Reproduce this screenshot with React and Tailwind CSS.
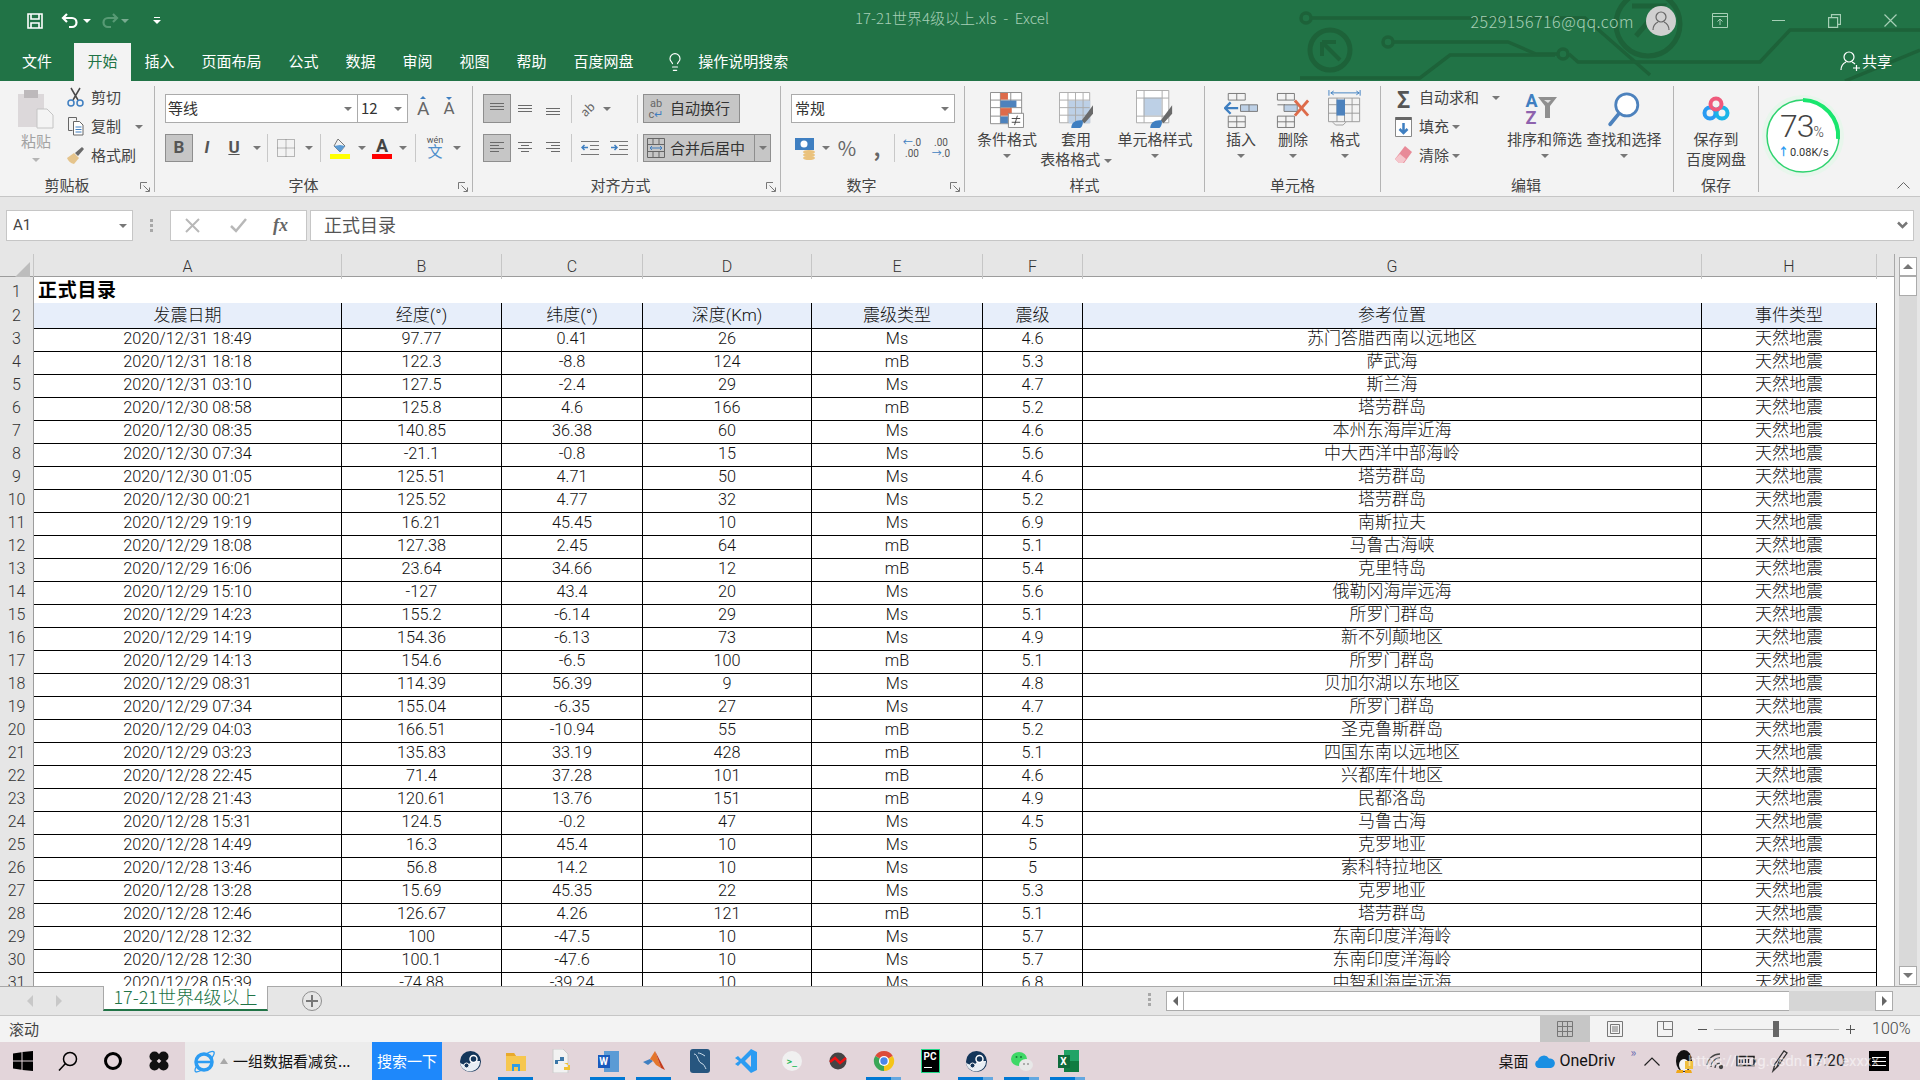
import React from 'react'
import { Lightbulb } from 'lucide-react'

const CELL_FONT = 'font-["Roboto","Noto_Sans_CJK_SC",sans-serif]'

const COLS = 'grid grid-cols-[34px_308px_160px_141px_169px_171px_100px_619px_175px]'

const ROWS = [
  ['2020/12/31 18:49', '97.77', '0.41', '26', 'Ms', '4.6', '苏门答腊西南以远地区'],
  ['2020/12/31 18:18', '122.3', '-8.8', '124', 'mB', '5.3', '萨武海'],
  ['2020/12/31 03:10', '127.5', '-2.4', '29', 'Ms', '4.7', '斯兰海'],
  ['2020/12/30 08:58', '125.8', '4.6', '166', 'mB', '5.2', '塔劳群岛'],
  ['2020/12/30 08:35', '140.85', '36.38', '60', 'Ms', '4.6', '本州东海岸近海'],
  ['2020/12/30 07:34', '-21.1', '-0.8', '15', 'Ms', '5.6', '中大西洋中部海岭'],
  ['2020/12/30 01:05', '125.51', '4.71', '50', 'Ms', '4.6', '塔劳群岛'],
  ['2020/12/30 00:21', '125.52', '4.77', '32', 'Ms', '5.2', '塔劳群岛'],
  ['2020/12/29 19:19', '16.21', '45.45', '10', 'Ms', '6.9', '南斯拉夫'],
  ['2020/12/29 18:08', '127.38', '2.45', '64', 'mB', '5.1', '马鲁古海峡'],
  ['2020/12/29 16:06', '23.64', '34.66', '12', 'mB', '5.4', '克里特岛'],
  ['2020/12/29 15:10', '-127', '43.4', '20', 'Ms', '5.6', '俄勒冈海岸远海'],
  ['2020/12/29 14:23', '155.2', '-6.14', '29', 'Ms', '5.1', '所罗门群岛'],
  ['2020/12/29 14:19', '154.36', '-6.13', '73', 'Ms', '4.9', '新不列颠地区'],
  ['2020/12/29 14:13', '154.6', '-6.5', '100', 'mB', '5.1', '所罗门群岛'],
  ['2020/12/29 08:31', '114.39', '56.39', '9', 'Ms', '4.8', '贝加尔湖以东地区'],
  ['2020/12/29 07:34', '155.04', '-6.35', '27', 'Ms', '4.7', '所罗门群岛'],
  ['2020/12/29 04:03', '166.51', '-10.94', '55', 'mB', '5.2', '圣克鲁斯群岛'],
  ['2020/12/29 03:23', '135.83', '33.19', '428', 'mB', '5.1', '四国东南以远地区'],
  ['2020/12/28 22:45', '71.4', '37.28', '101', 'mB', '4.6', '兴都库什地区'],
  ['2020/12/28 21:43', '120.61', '13.76', '151', 'mB', '4.9', '民都洛岛'],
  ['2020/12/28 15:31', '124.5', '-0.2', '47', 'Ms', '4.5', '马鲁古海'],
  ['2020/12/28 14:49', '16.3', '45.4', '10', 'Ms', '5', '克罗地亚'],
  ['2020/12/28 13:46', '56.8', '14.2', '10', 'Ms', '5', '索科特拉地区'],
  ['2020/12/28 13:28', '15.69', '45.35', '22', 'Ms', '5.3', '克罗地亚'],
  ['2020/12/28 12:46', '126.67', '4.26', '121', 'mB', '5.1', '塔劳群岛'],
  ['2020/12/28 12:32', '100', '-47.5', '10', 'Ms', '5.7', '东南印度洋海岭'],
  ['2020/12/28 12:30', '100.1', '-47.6', '10', 'Ms', '5.7', '东南印度洋海岭'],
  ['2020/12/28 05:39', '-74.88', '-39.24', '10', 'Ms', '6.8', '中智利海岸远海'],
]

const HEADERS = ['发震日期', '经度(°)', '纬度(°)', '深度(Km)', '震级类型', '震级', '参考位置', '事件类型']

function Caret({ className = '' }) {
  return <span className={`inline-block w-0 h-0 border-x-[4px] border-x-transparent border-t-[4px] border-t-[#777] ${className}`} />
}

function Launcher() {
  return (
    <svg className="absolute right-[3px] bottom-[3px]" width="11" height="11" viewBox="0 0 11 11" fill="none" stroke="#777">
      <path d="M.5 7V.5H7M3.5 3.5l5.5 5.500M9.500 5.500v4h-4" />
    </svg>
  )
}

function Group({ className = '', label, launcher, children }) {
  return (
    <div className={`relative flex flex-col h-full ${className}`}>
      <div className="flex-1 min-h-0">{children}</div>
      <div className="h-[22px] pb-[2px] flex items-center justify-center text-[15px] leading-none text-[#444]">{label}</div>
      {launcher && <Launcher />}
    </div>
  )
}

function Divider() {
  return <div className="w-px h-[106px] mt-[5px] bg-[#b4b4b4] shrink-0" />
}

function MiniDivider() {
  return <div className="w-px h-[28px] bg-[#c8c8c8] shrink-0" />
}

function Box({ className = '', children }) {
  return <div className={`flex items-center justify-center shrink-0 h-[28px] ${className}`}>{children}</div>
}

const ACTIVE = 'bg-[#c6c6c6] border border-[#8e8e8e]'

function AlignLines({ lines }) {
  return (
    <svg width="18" height="20" viewBox="0 0 18 20" stroke="#6a6a6a">
      {lines.map((l, i) => <path key={i} d={`M${l[0]} ${l[2]}.5H${l[1]}`} />)}
    </svg>
  )
}

function LargeButton({ className = '', icon, lines, arrow = true }) {
  return (
    <div className={`flex flex-col items-center shrink-0 ${className}`}>
      <div className="h-[48px] pt-[11px] flex items-start justify-center">{icon}</div>
      <div className="text-[15px] leading-[20px] text-[#444] whitespace-nowrap text-center">{lines}</div>
      {arrow && <div className="h-[14px] flex items-center"><Caret /></div>}
    </div>
  )
}

function SmallButton({ icon, text, caret, caretClass = 'ml-[6px]' }) {
  return (
    <div className="h-[29px] flex items-center text-[15px] text-[#444] whitespace-nowrap">
      <span className="w-[23px] flex justify-center shrink-0">{icon}</span>
      <span className="ml-[4px]">{text}</span>
      {caret && <Caret className={caretClass} />}
    </div>
  )
}

function CircuitBackground() {
  return (
    <svg className="absolute inset-0 pointer-events-none" width="1920" height="81" viewBox="0 0 1920 81" fill="none" stroke="#1d6239" strokeWidth="3.500">
      <circle cx="1306" cy="18" r="5" />
      <path d="M1311 18H1585L1650 75" />
      <circle cx="1388" cy="42" r="5" />
      <path d="M1393 42H1508L1536 54H1557" />
      <circle cx="1563" cy="54" r="5" />
      <path d="M1569 54L1578 62H1760L1790 30H1920" />
      <path d="M1300 78H1420L1450 55H1555" />
      <circle cx="1330" cy="50" r="20" strokeWidth="5" />
      <path d="M1322 42H1336M1322 42V56M1323 43L1340 60" strokeWidth="4" />
      <circle cx="1648" cy="24" r="32" strokeWidth="5" />
      <path d="M1632 6H1662L1636 36" strokeWidth="5" />
      <path d="M1845 81L1920 50" />
    </svg>
  )
}

function TitleBar() {
  return (
    <div className="relative h-[43px] pb-[2px] flex items-center text-white shrink-0">
      <svg className="ml-[27px]" width="16" height="16" viewBox="0 0 16 16" fill="none" stroke="#fff" strokeWidth="1.600">
        <path d="M1 1h14v14H1z" />
        <path d="M4 1v5h8V1M4 15V10h8v5" />
      </svg>
      <svg className="ml-[18px]" width="20" height="18" viewBox="0 0 20 18" fill="none" stroke="#fff" strokeWidth="2.200">
        <path d="M6 2L2 6l4 4M2 6h9a4.500 4.500 0 0 1 0 9H8" />
      </svg>
      <Caret className="ml-[2px] border-t-white border-x-[3px] border-t-[3px]" />
      <svg className="ml-[8px] opacity-40" width="20" height="18" viewBox="0 0 20 18" fill="none" stroke="#a9d4ba" strokeWidth="2.200">
        <path d="M14 2l4 4-4 4M18 6H9a4.500 4.500 0 0 0 0 9h3" />
      </svg>
      <Caret className="ml-[2px] opacity-40 border-t-white border-x-[3px] border-t-[3px]" />
      <div className="ml-[24px] flex flex-col items-center gap-[2px]">
        <div className="w-[6px] h-px bg-white" />
        <Caret className="border-t-white border-x-[3px] border-t-[3px]" />
      </div>
      <div className="absolute left-[855px] top-[7px] text-[15px] leading-[22px] text-[#a6cfb6] font-light whitespace-pre">17-21世界4级以上.xls  -  Excel</div>
      <div className="ml-auto flex items-center">
        <span className="text-[16px] text-[#a6cfb6] font-light tracking-[0.500px]">2529156716@qq.com</span>
        <div className="ml-[12px] w-[30px] h-[30px] rounded-full bg-[#d0d0d0] flex items-center justify-center">
          <svg width="20" height="22" viewBox="0 0 20 22" fill="none" stroke="#666" strokeWidth="1.200">
            <circle cx="10" cy="7" r="5" />
            <path d="M2 20c0-5 3-7 5-8M18 20c0-5-3-7-5-8" />
          </svg>
        </div>
        <svg className="ml-[36px]" width="16" height="15" viewBox="0 0 16 15" fill="none" stroke="#a6cfb6">
          <path d="M.5.500h15v14H.5zM.5 3.500h15M8 12V6M5.500 8.500L8 6l2.500 2.500" />
        </svg>
        <div className="ml-[44px] w-[13px] h-px bg-[#a6cfb6]" />
        <svg className="ml-[43px]" width="13" height="14" viewBox="0 0 13 14" fill="none" stroke="#a6cfb6" strokeWidth="1.200">
          <path d="M.6 3.600h9v9.800h-9zM3.500 3.500V.6h9v9.800h-2.900" />
        </svg>
        <svg className="ml-[43px] mr-[23px]" width="13" height="13" viewBox="0 0 13 13" stroke="#a6cfb6" strokeWidth="1.200">
          <path d="M.5.500l12 12M12.500.5l-12 12" />
        </svg>
      </div>
    </div>
  )
}

function TabBar() {
  const tabs = ['插入', '页面布局', '公式', '数据', '审阅', '视图', '帮助', '百度网盘']
  return (
    <div className="relative h-[38px] flex items-stretch text-white text-[15px] shrink-0">
      <div className="w-[74px] pl-[22px] pb-[2px] flex items-center">文件</div>
      <div className="w-[57px] pb-[2px] bg-[#f3f3f3] text-[#217346] flex items-center justify-center">开始</div>
      {tabs.map((t) => <div key={t} className="px-[13.500px] pb-[2px] flex items-center">{t}</div>)}
      <div className="ml-[18px] flex items-center"><Lightbulb size={20} strokeWidth={1.400} /></div>
      <div className="ml-[13px] pb-[2px] flex items-center">操作说明搜索</div>
      <div className="ml-auto mr-[28px] pb-[2px] flex items-center">
        <svg width="20" height="22" viewBox="0 0 20 22" fill="none" stroke="#fff" strokeWidth="1.200">
          <circle cx="9" cy="7" r="5" />
          <path d="M1 20c0-5 3-7 5-8M12 12c1 .5 2 1 3 2M13 18h7M16.500 15v6" />
        </svg>
        <span className="ml-[2px]">共享</span>
      </div>
    </div>
  )
}

function Clipboard() {
  return (
    <Group className="w-[154px]" label={<span className="mr-[20px]">剪贴板</span>} launcher>
      <div className="flex h-full">
        <div className="w-[64px] flex flex-col items-center pl-[8px] pt-[8px]">
          <svg width="36" height="40" viewBox="0 0 36 40">
            <rect x="0" y="5" width="26" height="33" fill="#dcd8da" />
            <rect x="6" y="1" width="14" height="8" fill="#bdb9bb" />
            <path d="M19 20h10l6 6v13H19z" fill="#f4f4f4" stroke="#c4c4c4" />
          </svg>
          <span className="text-[15px] leading-[20px] text-[#a2a2a2] mt-[2px]">粘贴</span>
          <Caret className="mt-[7px] border-t-[#b5b5b5]" />
        </div>
        <div className="flex flex-col pt-[2px]">
          <SmallButton text="剪切" icon={
            <svg width="17" height="21" viewBox="0 0 17 21" fill="none" stroke="#4a4a4a" strokeWidth="1.500">
              <path d="M4 1l7 12M13 1L6 13" />
              <circle cx="4" cy="16" r="3" stroke="#3f7fc1" />
              <circle cx="13" cy="16" r="3" stroke="#3f7fc1" />
            </svg>
          } />
          <SmallButton text="复制" caret caretClass="ml-[14px]" icon={
            <svg width="16" height="19" viewBox="0 0 16 19" fill="none" stroke="#666">
              <path d="M.5.500h8v3M.5.500v13h4" />
              <path d="M5.500 4.500h6l3.500 3.500v10H5.500z" fill="#fff" />
              <path d="M7.500 10h6M7.500 12.500h6M7.500 15h6" stroke="#3f7fc1" />
            </svg>
          } />
          <SmallButton text="格式刷" icon={
            <svg width="19" height="19" viewBox="0 0 19 19">
              <path d="M1 12l7-5 5 5-5 6q-5-1-7-6z" fill="#e5c48c" />
              <path d="M9 7l7-6 2 2-6 7z" fill="#6a6a6a" />
            </svg>
          } />
        </div>
      </div>
    </Group>
  )
}

function FontGroup() {
  return (
    <Group className="w-[317px]" label={<span className="mr-[20px]">字体</span>} launcher>
      <div className="pl-[10px] pt-[13px] flex flex-col gap-[11px]">
        <div className="flex items-center h-[29px]">
          <div className="w-[193px] h-[29px] bg-white border border-[#ababab] flex items-center pl-[2px] text-[15px] text-[#333]">
            等线
            <Caret className="ml-auto mr-[5px]" />
          </div>
          <div className="w-[50px] h-[29px] bg-white border border-l-0 border-[#ababab] flex items-center pl-[3px] text-[15px] text-[#333]">
            12
            <Caret className="ml-auto mr-[5px]" />
          </div>
          <span className={`ml-[9px] text-[19px] leading-none text-[#666] ${CELL_FONT} relative`}>
            A
            <span className="absolute -top-[3px] left-[3px] w-0 h-0 border-x-[3px] border-x-transparent border-b-[3px] border-b-[#3f7fc1]" />
          </span>
          <span className={`ml-[14px] text-[17px] leading-none text-[#666] ${CELL_FONT} relative`}>
            A
            <span className="absolute -top-[3px] left-[3px] w-0 h-0 border-x-[3px] border-x-transparent border-t-[3px] border-t-[#3f7fc1]" />
          </span>
        </div>
        <div className={`flex items-center text-[17px] text-[#555] ${CELL_FONT}`}>
          <Box className={`w-[28px] font-bold ${ACTIVE}`}>B</Box>
          <Box className="w-[28px] italic font-bold">I</Box>
          <Box className="w-[26px] font-bold underline">U</Box>
          <Box className="w-[20px]"><Caret /></Box>
          <MiniDivider />
          <Box className="w-[36px]">
            <svg width="18" height="18" viewBox="0 0 18 18" fill="none" stroke="#777" strokeDasharray="1 1">
              <path d="M.5.500h17v17H.5zM9 .5v17M.5 9h17" />
            </svg>
          </Box>
          <Box className="w-[10px]"><Caret /></Box>
          <div className="w-[6px]" />
          <MiniDivider />
          <Box className="w-[38px]">
            <div className="flex flex-col items-center">
              <svg width="18" height="16" viewBox="0 0 18 16" fill="none" stroke="#777">
                <path d="M7 1l7 7-5 6-6-6z" />
                <path d="M9 7l5 1-5 6-6-6z" fill="#5b9bd5" stroke="none" />
              </svg>
              <div className="w-[20px] h-[5px] bg-[#ffff00]" />
            </div>
          </Box>
          <Box className="w-[6px]"><Caret /></Box>
          <div className="w-[5px]" />
          <Box className="w-[24px]">
            <div className="flex flex-col items-center leading-[16px]">
              <span className="font-bold text-[18px] text-[#444]">A</span>
              <div className="w-[20px] h-[5px] bg-[#ff0000]" />
            </div>
          </Box>
          <Box className="w-[18px]"><Caret /></Box>
          <div className="w-[3px]" />
          <MiniDivider />
          <Box className="w-[38px]">
            <div className="flex flex-col items-center leading-none">
              <span className="text-[9px] text-[#555]">wén</span>
              <span className="text-[15px] text-[#4d8ecb]">文</span>
            </div>
          </Box>
          <Box className="w-[6px]"><Caret /></Box>
        </div>
      </div>
    </Group>
  )
}

const TOP_L = [[2, 16, 4], [2, 16, 7], [2, 16, 10]]
const MID_L = [[2, 16, 6], [2, 16, 9], [2, 16, 12]]
const BOT_L = [[2, 16, 9], [2, 16, 12], [2, 16, 15]]
const LEFT_L = [[2, 16, 4], [2, 11, 7], [2, 16, 10], [2, 11, 13]]
const CEN_L = [[2, 16, 4], [5, 13, 7], [2, 16, 10], [5, 13, 13]]
const RIGHT_L = [[2, 16, 4], [7, 16, 7], [2, 16, 10], [7, 16, 13]]

function Indent({ reverse }) {
  return (
    <svg width="18" height="18" viewBox="0 0 18 18" fill="none" stroke="#777">
      <path d="M0 2.500h18M9 6.500h9M9 10.500h9M0 15.500h18" />
      <path d={reverse ? 'M1 8.500h6M4.500 6L7 8.500 4.500 11' : 'M7 8.500H1M3.500 6L1 8.500 3.500 11'} stroke="#3f7fc1" strokeWidth="1.500" />
    </svg>
  )
}

function AlignGroup() {
  return (
    <Group className="w-[307px]" label={<span className="mr-[12px]">对齐方式</span>} launcher>
      <div className="pl-[10px] pt-[13px] flex flex-col gap-[11px]">
        <div className="flex items-center h-[29px]">
          <Box className={`w-[28px] h-[29px] ${ACTIVE}`}><AlignLines lines={TOP_L} /></Box>
          <Box className="w-[28px]"><AlignLines lines={MID_L} /></Box>
          <Box className="w-[28px]"><AlignLines lines={BOT_L} /></Box>
          <div className="w-[4px]" />
          <MiniDivider />
          <Box className="w-[30px]">
            <span className="text-[12px] text-[#666] -rotate-45 leading-none">ab</span>
          </Box>
          <Box className="w-[10px]"><Caret /></Box>
          <div className="w-[25px]" />
          <MiniDivider />
          <div className={`ml-[5px] w-[97px] h-[29px] flex items-center text-[15px] text-[#333] ${ACTIVE}`}>
            <span className={`w-[24px] text-[11px] leading-[11px] text-center text-[#666] ${CELL_FONT}`}>ab<br />c<span className="text-[#3f7fc1]">↵</span></span>
            <span className="ml-[2px]">自动换行</span>
          </div>
        </div>
        <div className="flex items-center">
          <Box className={`w-[28px] ${ACTIVE}`}><AlignLines lines={LEFT_L} /></Box>
          <Box className="w-[28px]"><AlignLines lines={CEN_L} /></Box>
          <Box className="w-[28px]"><AlignLines lines={RIGHT_L} /></Box>
          <div className="w-[4px]" />
          <MiniDivider />
          <Box className="w-[36px]"><Indent /></Box>
          <Box className="w-[22px]"><Indent reverse /></Box>
          <div className="w-[7px]" />
          <MiniDivider />
          <div className={`ml-[5px] w-[112px] h-[28px] flex items-center text-[15px] text-[#333] ${ACTIVE}`}>
            <svg className="ml-[3px]" width="18" height="20" viewBox="0 0 18 20" fill="none" stroke="#666">
              <path d="M.5.500h17v19H.5zM.5 6.500h17M.5 13.500h17M6 .5v6M12 .5v6M6 13.500v6M12 13.500v6" />
              <path d="M3 10h12M5 8l-2 2 2 2M13 8l2 2-2 2" stroke="#3f7fc1" />
            </svg>
            <span className="ml-[5px]">合并后居中</span>
          </div>
          <div className="w-[16px] h-[28px] bg-[#c6c6c6] border border-l-0 border-[#8e8e8e] flex items-center justify-center"><Caret className="border-x-[3px] border-t-[3px]" /></div>
        </div>
      </div>
    </Group>
  )
}

function NumberGroup() {
  return (
    <Group className="w-[183px]" label={<span className="mr-[22px]">数字</span>} launcher>
      <div className="pl-[10px] pt-[13px] flex flex-col gap-[11px]">
        <div className="w-[164px] h-[29px] bg-white border border-[#ababab] flex items-center pl-[3px] text-[15px] text-[#333]">
          常规
          <Caret className="ml-auto mr-[5px]" />
        </div>
        <div className="flex items-center text-[#666]">
          <Box className="w-[26px] ml-[2px]">
            <svg width="24" height="24" viewBox="0 0 24 24">
              <rect x="1" y="2" width="19" height="12" fill="#3f7fc1" />
              <circle cx="10" cy="8" r="3.500" fill="#fff" />
              <ellipse cx="15" cy="16" rx="6" ry="2" fill="#eac27d" />
              <ellipse cx="15" cy="19" rx="6" ry="2" fill="#eac27d" />
              <ellipse cx="15" cy="22" rx="6" ry="2" fill="#eac27d" />
            </svg>
          </Box>
          <Box className="w-[11px] justify-end"><Caret /></Box>
          <Box className="w-[22px] text-[20px] ml-[6px]">%</Box>
          <Box className="w-[24px] ml-[7px] text-[20px] font-bold">,</Box>
          <div className="w-[5px]" />
          <MiniDivider />
          <Box className={`w-[34px] text-[10px] leading-[11px] text-[#555] ${CELL_FONT}`}>
            <span className="text-center"><span className="text-[#3f7fc1]">←</span>.0<br />.00</span>
          </Box>
          <Box className={`w-[24px] text-[10px] leading-[11px] text-[#555] ${CELL_FONT}`}>
            <span className="text-center">.00<br /><span className="text-[#3f7fc1]">→</span>.0</span>
          </Box>
        </div>
      </div>
    </Group>
  )
}

function StylesGroup() {
  return (
    <Group className="w-[239px]" label="样式">
      <div className="flex h-full">
        <LargeButton className="w-[84px]" lines="条件格式" icon={
          <svg width="34" height="36" viewBox="0 0 36 38" fill="none" stroke="#8a8a8a">
            <path d="M.5.500h33v33H.5zM.5 8.500h33M.5 16.500h33M.5 25.500h33M11 .5v33M22 .5v33" fill="#fff" />
            <path d="M11 1h8v7h-8z" fill="#dd6b4a" stroke="none" />
            <path d="M11 9h17v7H11z" fill="#4d82bd" stroke="none" />
            <path d="M11 17h12v8H11z" fill="#dd6b4a" stroke="none" />
            <path d="M11 26h8v7h-8z" fill="#4d82bd" stroke="none" />
            <path d="M19.500 22.500h16v15h-16z" fill="#fff" />
            <path d="M23 28h9M23 32h9M29 25l-3 10" stroke="#444" />
          </svg>
        } />
        <LargeButton className="w-[54px]" arrow={false} lines={<>套用<br /><span>表格格式 <Caret className="align-middle" /></span></>} icon={
          <svg width="34" height="36" viewBox="0 0 36 38" fill="none" stroke="#aaa">
            <path d="M.5.500h32v32H.5z" fill="#fff" />
            <path d="M10 9h23v24H10z" fill="#bdd0e6" stroke="none" />
            <path d="M.5 8.500h32M.5 16.500h32M.5 24.500h32M9.500.5v32M17.500.5v32M25.500.5v32" />
            <path d="M36 14L24 30l3 3 9-10z" fill="#6a6a6a" stroke="none" />
            <path d="M13 38c0-6 5-9 12-8 1 3-1 8-3 8z" fill="#3f7fc1" stroke="none" />
          </svg>
        } />
        <LargeButton className="w-[104px]" lines={<span>单元格样式</span>} icon={
          <svg width="38" height="38" viewBox="0 0 40 40" fill="none" stroke="#aaa" className="-mt-[2px]">
            <path d="M.5.500h34v34H.5z" fill="#fff" />
            <path d="M8 8h19v19H8z" fill="#bdd0e6" stroke="none" />
            <path d="M.5 8.500h34M.5 27.500h34M8.500.5v34M27.500.5v34" />
            <path d="M38 16L26 32l3 3 9-10z" fill="#6a6a6a" stroke="none" />
            <path d="M15 40c0-6 5-9 12-8 1 3-1 8-3 8z" fill="#3f7fc1" stroke="none" />
          </svg>
        } />
      </div>
    </Group>
  )
}

function CellsGroup() {
  return (
    <Group className="w-[175px]" label="单元格">
      <div className="flex h-full pl-[10px]">
        <LargeButton className="w-[52px]" lines="插入" icon={
          <svg width="34" height="36" viewBox="0 0 36 38" fill="none" stroke="#777">
            <path d="M4.500 1.500h18v7h-18zM13.500 1.500v7M4.500 25.500h18v12h-18zM13.500 25.500v12M4.500 31.500h18" />
            <path d="M17.500 13.500h18v7h-18zM26.500 13.500v7" fill="#bdd0e6" />
            <path d="M15 17H2M7 11l-6 6 6 6" stroke="#3f7fc1" strokeWidth="2.500" />
          </svg>
        } />
        <LargeButton className="w-[52px]" lines="删除" icon={
          <svg width="34" height="36" viewBox="0 0 36 38" fill="none" stroke="#777">
            <path d="M1.500 1.500h18v7h-18zM10.500 1.500v7M1.500 25.500h18v12h-18zM10.500 25.500v12M1.500 31.500h18M1.500 13.500h8" />
            <path d="M8.500 13.500h14v7h-14z" fill="#bdd0e6" />
            <path d="M20 9l14 16M34 9L20 25" stroke="#dd6b4a" strokeWidth="3" />
          </svg>
        } />
        <LargeButton className="w-[52px]" lines="格式" icon={
          <svg width="34" height="38" viewBox="0 0 36 40" fill="none" stroke="#999" className="-mt-[3px]">
            <path d="M1 1v6M34 1v6M3 4h30M3 4l3-2M3 4l3 2M33 4l-3-2M33 4l-3 2" stroke="#3f7fc1" />
            <path d="M.5 9.500h33v25H.5zM.5 16.500h33M.5 25.500h33M9.500 9.500v25M17.500 9.500v25M25.500 9.500v25" />
            <path d="M9 11h9v17H9z" fill="#4d82bd" stroke="none" />
            <path d="M5 35l3 3h8l3-3" />
          </svg>
        } />
      </div>
    </Group>
  )
}

function EditingGroup() {
  return (
    <Group className="w-[292px]" label={<span className="-ml-[2px]">编辑</span>}>
      <div className="flex h-full pl-[11px]">
        <div className="w-[115px] shrink-0 flex flex-col pt-[2px]">
          <SmallButton text="自动求和" caret caretClass="ml-[13px]" icon={<span className="text-[22px] leading-none text-[#555] font-semibold">Σ</span>} />
          <SmallButton text="填充" caret caretClass="ml-[3px]" icon={
            <svg width="17" height="20" viewBox="0 0 17 20" fill="none" stroke="#888">
              <path d="M.5.500h16v19H.5z" fill="#fff" />
              <path d="M.5 1.500h16" stroke="#666" strokeWidth="3" />
              <path d="M8.500 6v10M4.500 12l4 4 4-4" stroke="#3f7fc1" strokeWidth="2.500" />
            </svg>
          } />
          <SmallButton text="清除" caret caretClass="ml-[3px]" icon={
            <svg width="17" height="19" viewBox="0 0 17 19">
              <path d="M10 0l7 6-8 11H4L0 13z" fill="#e88a98" />
              <path d="M0 13l5-5 6 5-3 4H4z" fill="#f5c6cc" />
            </svg>
          } />
        </div>
        <LargeButton className="w-[75px]" lines="排序和筛选" icon={
          <div className="flex items-start ml-[-6px]">
            <span className={`flex flex-col text-[18px] leading-[17px] font-bold ${CELL_FONT}`}>
              <span className="text-[#3f7fc1]">A</span>
              <span className="text-[#8e62ad]">Z</span>
            </span>
            <svg className="mt-[5px]" width="20" height="22" viewBox="0 0 20 22">
              <path d="M0 0h19L12 9v12H7V9z" fill="#8f8f8f" />
              <path d="M6 3h7l-3 3z" fill="#e0e0e0" />
            </svg>
          </div>
        } />
        <LargeButton className="w-[80px] ml-[2px]" lines="查找和选择" icon={
          <svg width="32" height="35" viewBox="0 0 34 38" fill="none">
            <circle cx="20" cy="14" r="12" fill="#fff" stroke="#4d82bd" strokeWidth="3" />
            <path d="M11 24L2 35" stroke="#4d82bd" strokeWidth="4" strokeLinecap="round" />
          </svg>
        } />
      </div>
    </Group>
  )
}

function SaveGroup() {
  return (
    <Group className="w-[84px]" label="保存">
      <LargeButton lines={<>保存到<br />百度网盘</>} arrow={false} icon={
        <svg className="mt-[4px]" width="28" height="26" viewBox="0 0 28 26" fill="none" strokeWidth="4">
          <circle cx="8" cy="17" r="5.500" stroke="#2a9bf2" />
          <circle cx="20" cy="17" r="5.500" stroke="#19b4e8" />
          <circle cx="14" cy="8" r="5.500" stroke="#ef5a7c" />
        </svg>
      } />
    </Group>
  )
}

function Gauge() {
  return (
    <div className="relative w-[82px] h-[82px] ml-[3px] mt-[14px] rounded-full bg-[#e8f6ec] shrink-0">
      <svg className="absolute inset-0" width="82" height="82" viewBox="0 0 82 82" fill="none">
        <circle cx="41" cy="41" r="36" fill="#fff" stroke="#2fd36f" strokeWidth="1.500" />
        <path d="M41 5A36 36 0 0 1 76 44" stroke="#19e66e" strokeWidth="4" />
      </svg>
      <div className={`absolute left-[18px] top-[15px] flex items-baseline text-[#444] font-light leading-none ${CELL_FONT}`}>
        <span className="text-[32px] tracking-[-1px]">73</span>
        <span className="text-[14px]">%</span>
      </div>
      <div className={`absolute left-[16px] top-[52px] flex items-center text-[11px] leading-none text-[#333] ${CELL_FONT}`}>
        <span className="text-[#2a9bf2] mr-[1px] font-bold">↑</span>0.08K/s
      </div>
    </div>
  )
}

function Ribbon() {
  return (
    <div className="relative h-[116px] bg-[#f3f3f3] border-b border-b-[#c6c6c6] flex shrink-0">
      <Clipboard />
      <Divider />
      <FontGroup />
      <Divider />
      <AlignGroup />
      <Divider />
      <NumberGroup />
      <Divider />
      <StylesGroup />
      <Divider />
      <CellsGroup />
      <Divider />
      <EditingGroup />
      <Divider />
      <SaveGroup />
      <Divider />
      <Gauge />
      <svg className="absolute right-[10px] bottom-[7px]" width="13" height="8" viewBox="0 0 13 8" fill="none" stroke="#666">
        <path d="M.5 7.500l6-6 6 6" />
      </svg>
    </div>
  )
}

function FormulaBar() {
  return (
    <div className="h-[57px] bg-[#e6e6e6] flex items-start pt-[13px] pl-[6px] shrink-0">
      <div className={`w-[127px] h-[31px] bg-white border border-[#c6c6c6] flex items-center pl-[6px] text-[15px] text-[#444] ${CELL_FONT}`}>
        A1
        <Caret className="ml-auto mr-[5px]" />
      </div>
      <div className="w-[37px] h-[31px] flex flex-col items-center justify-center gap-[2px]">
        <span className="w-[3px] h-[3px] bg-[#a8a8a8]" />
        <span className="w-[3px] h-[3px] bg-[#a8a8a8]" />
        <span className="w-[3px] h-[3px] bg-[#a8a8a8]" />
      </div>
      <div className="w-[137px] h-[31px] bg-white border border-[#c6c6c6] flex items-center">
        <svg className="ml-[14px]" width="15" height="15" viewBox="0 0 15 15" stroke="#b8b8b8" strokeWidth="2">
          <path d="M1 1l13 13M14 1L1 14" />
        </svg>
        <svg className="ml-[30px]" width="17" height="15" viewBox="0 0 17 15" fill="none" stroke="#b8b8b8" strokeWidth="2.500">
          <path d="M1 8l5 5L16 1" />
        </svg>
        <span className='ml-[26px] text-[18px] italic font-bold font-["Liberation_Serif",serif] text-[#666]'>fx</span>
      </div>
      <div className="ml-[3px] w-[1604px] h-[31px] bg-white border border-[#c6c6c6] flex items-center pb-[2px] pl-[13px] text-[18px] text-[#555]">
        正式目录
        <svg className="ml-auto mr-[5px]" width="11" height="8" viewBox="0 0 11 8" fill="none" stroke="#777" strokeWidth="2.500">
          <path d="M1 1.500l4.500 4.500L10 1.500" />
        </svg>
      </div>
    </div>
  )
}

function ColumnHeaders() {
  return (
    <div className={`${COLS} h-[23px] border-b border-b-[#9c9c9c] bg-[#e6e6e6] text-[16px] leading-[25px] text-[#333] font-light shrink-0`}>
      <div className="border-r border-r-[#c6c6c6] flex items-end justify-end pr-[3px] pb-[2px]">
        <span className="w-0 h-0 border-l-[15px] border-l-transparent border-b-[15px] border-b-[#bdbdbd]" />
      </div>
      {['A', 'B', 'C', 'D', 'E', 'F', 'G', 'H'].map((c) => (
        <div key={c} className="border-r border-r-[#c6c6c6] text-center">{c}</div>
      ))}
    </div>
  )
}

function RowHeader({ n }) {
  return (
    <div className="bg-[#e6e6e6] border-r border-r-[#9c9c9c] border-b border-b-[#c6c6c6] text-[16px] text-center text-[#333] font-light">{n}</div>
  )
}

function Sheet() {
  return (
    <div className={`w-[1895px] flex flex-col overflow-hidden bg-white border-r border-r-[#a8a8a8] ${CELL_FONT}`}>
      <ColumnHeaders />
      <div className="flex-1 min-h-0 overflow-hidden text-[16.300px] leading-[25px] text-[#111] font-light">
        <div className={`${COLS} h-[26px]`}>
          <div className="bg-[#e6e6e6] border-r border-r-[#9c9c9c] border-b border-b-[#c6c6c6] text-[16px] text-center text-[#333] leading-[29px]">1</div>
          <div className="col-span-8 border-b border-b-black pl-[4px] text-[19px] leading-[28px] font-bold text-black tracking-[0.700px]">正式目录</div>
        </div>
        <div className={`${COLS} h-[23px]`}>
          <RowHeader n={2} />
          {HEADERS.map((h) => (
            <div key={h} className="bg-[#e7eefa] border-r border-b border-black text-center text-[17px]">{h}</div>
          ))}
        </div>
        {ROWS.map((r, i) => (
          <div key={i} className={`${COLS} h-[23px]`}>
            <RowHeader n={i + 3} />
            {r.map((v, j) => (
              <div key={j} className={`border-r border-b border-black text-center whitespace-nowrap ${j === 6 ? 'text-[17px]' : ''}`}>{v}</div>
            ))}
            <div className="border-r border-b border-black text-center text-[17px]">天然地震</div>
          </div>
        ))}
      </div>
    </div>
  )
}

function VScroll() {
  return (
    <div className="w-[25px] bg-[#e6e6e6] flex flex-col items-center pt-[3px] pb-[1px]">
      <div className="w-[18px] h-[19px] bg-white border border-[#ababab] flex items-center justify-center">
        <span className="w-0 h-0 border-x-[5px] border-x-transparent border-b-[5px] border-b-[#777]" />
      </div>
      <div className="w-[18px] flex-1 bg-[#d9d9d9]">
        <div className="h-[20px] bg-white border border-[#ababab]" />
      </div>
      <div className="w-[18px] h-[19px] bg-white border border-[#ababab] flex items-center justify-center">
        <span className="w-0 h-0 border-x-[5px] border-x-transparent border-t-[5px] border-t-[#777]" />
      </div>
    </div>
  )
}

function SheetTabs() {
  return (
    <div className="h-[29px] bg-[#e6e6e6] border-t border-t-[#a8a8a8] flex items-start shrink-0">
      <span className="ml-[27px] mt-[8px] w-0 h-0 border-y-[6px] border-y-transparent border-r-[6px] border-r-[#c8c8c8]" />
      <span className="ml-[23px] mt-[8px] w-0 h-0 border-y-[6px] border-y-transparent border-l-[6px] border-l-[#c8c8c8]" />
      <div className="ml-[41px] w-[165px] h-[25px] -mt-px bg-white border-x border-x-[#a8a8a8] border-b-[2px] border-b-[#217346] text-[#217346] text-[18px] leading-[21px] text-center font-light">17-21世界4级以上</div>
      <div className="ml-[34px] mt-[4px] w-[20px] h-[20px] rounded-full border border-[#8e8e8e] flex items-center justify-center">
        <svg width="12" height="12" viewBox="0 0 12 12" stroke="#777" strokeWidth="2">
          <path d="M6 0v12M0 6h12" />
        </svg>
      </div>
      <div className="ml-[826px] mt-[6px] flex flex-col gap-[2px]">
        <span className="w-[3px] h-[3px] bg-[#a8a8a8]" />
        <span className="w-[3px] h-[3px] bg-[#a8a8a8]" />
        <span className="w-[3px] h-[3px] bg-[#a8a8a8]" />
      </div>
      <div className="ml-[15px] mt-[4px] flex h-[20px]">
        <div className="w-[18px] bg-white border border-[#ababab] flex items-center justify-center">
          <span className="w-0 h-0 border-y-[5px] border-y-transparent border-r-[5px] border-r-[#666]" />
        </div>
        <div className="w-[605px] bg-white border-y border-y-[#ababab]" />
        <div className="w-[86px] bg-[#d6d6d6]" />
        <div className="w-[18px] bg-white border border-[#ababab] flex items-center justify-center">
          <span className="w-0 h-0 border-y-[5px] border-y-transparent border-l-[5px] border-l-[#666]" />
        </div>
      </div>
    </div>
  )
}

function StatusBar() {
  return (
    <div className="h-[27px] bg-[#f3f3f3] border-t border-t-[#c6c6c6] flex items-stretch text-[15px] text-[#444] shrink-0">
      <div className="pl-[9px] flex items-center">滚动</div>
      <div className="ml-auto w-[50px] bg-[#c6c6c6] flex items-center justify-center">
        <svg width="16" height="16" viewBox="0 0 16 16" fill="none" stroke="#777">
          <path d="M.5.500h15v15H.5zM5.500.5v15M10.500.5v15M.5 5.500h15M.5 10.500h15" />
        </svg>
      </div>
      <div className="w-[50px] flex items-center justify-center">
        <svg width="16" height="16" viewBox="0 0 16 16" fill="none" stroke="#777">
          <path d="M.5.500h15v15H.5zM3.500 3.500h9v9h-9zM5 6h6M5 8h6M5 10h6" />
        </svg>
      </div>
      <div className="w-[50px] flex items-center justify-center">
        <svg width="16" height="16" viewBox="0 0 16 16" fill="none" stroke="#777">
          <path d="M.5.500h15v15H.5zM6.500.5v8h9" />
        </svg>
      </div>
      <div className="ml-[8px] flex items-center"><span className="w-[9px] h-px bg-[#555]" /></div>
      <div className="ml-[7px] relative w-[125px] flex items-center">
        <div className="w-full h-px bg-[#b4b4b4]" />
        <span className="absolute left-[59px] top-[5px] w-[6px] h-[16px] bg-[#666]" />
      </div>
      <div className="ml-[7px] flex items-center text-[#555]">
        <svg width="9" height="9" viewBox="0 0 9 9" stroke="#555"><path d="M4.500 0v9M0 4.500h9" /></svg>
      </div>
      <div className={`ml-[17px] w-[48px] flex items-center font-light ${CELL_FONT} text-[16px]`}>100%</div>
    </div>
  )
}

function TaskIcon({ children, on, split }) {
  return (
    <div className="relative w-[46px] flex items-center justify-center shrink-0">
      {children}
      {on && (
        <div className="absolute bottom-0 left-[5px] w-[35px] h-[3px] flex">
          <span className={`h-full bg-[#0078d4] ${split ? 'w-[25px]' : 'w-[35px]'}`} />
          {split && <span className="h-full w-[10px] bg-[#64a8e0]" />}
        </div>
      )}
    </div>
  )
}

function SteamIcon() {
  return (
    <svg width="21" height="21" viewBox="0 0 21 21">
      <circle cx="10.500" cy="10.500" r="10.500" fill="#14365a" />
      <path d="M0 12l7 3 5-5 8 0a10 10 0 0 1-9 10.500A10.500 10.500 0 0 1 0 12z" fill="#e8eef4" />
      <circle cx="13.500" cy="8" r="3.500" fill="#14365a" stroke="#fff" strokeWidth="1.500" />
      <circle cx="6.500" cy="14.500" r="2.500" fill="#14365a" stroke="#fff" />
    </svg>
  )
}

function Taskbar() {
  return (
    <div className="relative h-[38px] bg-[#e3d5da] flex items-stretch shrink-0">
      <div className="w-[45px] flex items-center justify-center">
        <svg width="20" height="20" viewBox="0 0 20 20" fill="#000">
          <path d="M0 2.500l8.500-1.200v8.200H0zM9.500 1.100L20 0v9.500H9.500zM0 10.500h8.500v8.200L0 17.500zM9.500 10.500H20V20L9.500 18.900z" />
        </svg>
      </div>
      <div className="w-[45px] flex items-center justify-center">
        <svg width="20" height="20" viewBox="0 0 20 20" fill="none" stroke="#000" strokeWidth="1.500">
          <circle cx="12" cy="8" r="6.500" />
          <path d="M7.500 12.500L1 19.500" />
        </svg>
      </div>
      <div className="w-[45px] flex items-center justify-center">
        <div className="w-[18px] h-[18px] rounded-full border-[3px] border-black" />
      </div>
      <div className="w-[50px] flex items-center justify-center pr-[2px]">
        <svg width="20" height="20" viewBox="0 0 20 20" fill="#111">
          <circle cx="5.500" cy="5.500" r="5" />
          <circle cx="14.500" cy="5.500" r="5" />
          <circle cx="5.500" cy="14.500" r="5" />
          <circle cx="14.500" cy="14.500" r="5" />
          <circle cx="10" cy="10" r="1.500" fill="#e3d5da" />
        </svg>
      </div>
      <div className="w-[187px] bg-[#ececec] flex items-center text-[15px] text-[#111]">
        <svg className="ml-[8px]" width="22" height="24" viewBox="0 0 22 24" fill="none">
          <circle cx="11" cy="13" r="8" stroke="#2c9cf2" strokeWidth="3.500" />
          <path d="M4 13h14" stroke="#2c9cf2" strokeWidth="2.500" />
          <path d="M13 5q6-4 8-2 1 2-3 7M3 18q-2 4 0 5 2 0 6-2" stroke="#2c9cf2" strokeWidth="1.300" />
        </svg>
        <span className="ml-[5px] w-0 h-0 border-x-[4px] border-x-transparent border-b-[6px] border-b-[#a8a8a8]" />
        <span className="ml-[5px]">一组数据看减贫...</span>
      </div>
      <div className="w-[70px] bg-[#1e88fb] text-white text-[15px] flex items-center justify-center">搜索一下</div>
      <div className="w-[5px]" />
      <TaskIcon><SteamIcon /></TaskIcon>
      <TaskIcon on>
        <svg width="22" height="22" viewBox="0 0 22 22">
          <path d="M1 3h8l2 3h10v15H1z" fill="#f6c74f" />
          <path d="M1 3h8l2 3H1z" fill="#e8a92c" />
          <path d="M7 14h8v7h-2v-4H9v4H7z" fill="#2e9de5" />
        </svg>
      </TaskIcon>
      <TaskIcon>
        <svg width="20" height="24" viewBox="0 0 20 24">
          <path d="M1 0h10l5 5v19H1z" fill="#f2f2f2" stroke="#ccc" />
          <path d="M8 8h4v4H6v3H3v-4h5z" fill="#3b77a8" />
          <path d="M12 12h4v4h-4v3h6v-5h-2z" fill="#f2c230" transform="translate(0 2)" />
        </svg>
      </TaskIcon>
      <TaskIcon on>
        <div className="relative w-[21px] h-[21px]">
          <div className="absolute right-0 top-0 w-[15px] h-[21px] bg-[#5b9bd5]" />
          <div className={`absolute left-0 top-[4px] w-[12px] h-[13px] bg-[#185abd] text-white text-[10px] leading-[13px] font-bold text-center ${CELL_FONT}`}>W</div>
        </div>
      </TaskIcon>
      <TaskIcon on>
        <svg width="22" height="22" viewBox="0 0 22 22">
          <path d="M0 12l7-3 3 2-5 4z" fill="#3f7fc1" />
          <path d="M7 9l5-8 6 17-5-3-3-4z" fill="#e4762c" />
          <path d="M12 1l10 19-4-2z" fill="#c43b1c" />
        </svg>
      </TaskIcon>
      <TaskIcon>
        <div className="w-[20px] h-[24px] rounded-[3px] bg-[#27567f] flex items-center justify-center">
          <svg width="16" height="18" viewBox="0 0 16 18" fill="none" stroke="#cfe0ee">
            <path d="M2 2c4 0 4 8 7 9s4 4 5 6M6 1c2 0 4 1 7 3" />
          </svg>
        </div>
      </TaskIcon>
      <TaskIcon>
        <svg width="22" height="24" viewBox="0 0 22 24">
          <path d="M16 0l6 3v18l-6 3L6 14l-3 3-3-2 4-3-4-3 3-2 3 3z" fill="#2c9cf2" />
          <path d="M16 6l-6 6 6 6z" fill="#e3d5da" />
        </svg>
      </TaskIcon>
      <TaskIcon>
        <div className="w-[20px] h-[20px] rounded-full bg-[#f0f0f0] flex items-center justify-center text-[9px] leading-none text-[#19b955] font-bold">&gt;_</div>
      </TaskIcon>
      <TaskIcon>
        <svg width="18" height="18" viewBox="0 0 18 18">
          <circle cx="9" cy="9" r="8.500" fill="#444" />
          <path d="M1 10l5-4 5 5 6-5" fill="none" stroke="#e11" strokeWidth="2.500" />
        </svg>
      </TaskIcon>
      <TaskIcon on split>
        <svg width="22" height="24" viewBox="0 0 24 24">
          <path d="M12 12L2.470 6.500A11 11 0 0 1 21.530 6.500Z" fill="#dd4b39" />
          <path d="M12 12L21.530 6.500A11 11 0 0 1 12 23Z" fill="#f5c518" />
          <path d="M12 12L12 23A11 11 0 0 1 2.470 6.500Z" fill="#3aa757" />
          <circle cx="12" cy="12" r="5.500" fill="#fff" />
          <circle cx="12" cy="12" r="4" fill="#4a86e8" />
        </svg>
      </TaskIcon>
      <TaskIcon>
        <div className={`w-[19px] h-[24px] bg-black border border-[#21d789] text-white text-[10px] font-bold leading-[13px] pl-[2px] ${CELL_FONT}`}>
          PC
          <div className="w-[8px] h-px bg-white mt-[4px]" />
        </div>
      </TaskIcon>
      <TaskIcon on split><SteamIcon /></TaskIcon>
      <TaskIcon on split>
        <svg width="22" height="22" viewBox="0 0 22 22">
          <ellipse cx="8" cy="9" rx="8" ry="7" fill="#3fd866" />
          <ellipse cx="15" cy="15" rx="7" ry="6" fill="#e8e8e8" />
          <circle cx="13" cy="14" r="1" fill="#999" />
          <circle cx="17" cy="14" r="1" fill="#999" />
          <circle cx="5.500" cy="7" r="1" fill="#1b7a38" />
          <circle cx="10" cy="7" r="1" fill="#1b7a38" />
        </svg>
      </TaskIcon>
      <TaskIcon on split>
        <div className="relative w-[21px] h-[22px]">
          <div className="absolute right-0 top-0 w-[15px] h-[22px] bg-[#21a366]" />
          <div className="absolute right-0 top-[11px] w-[15px] h-[11px] bg-[#107c41]" />
          <div className={`absolute left-0 top-[5px] w-[12px] h-[13px] bg-[#0e6b3a] text-white text-[10px] leading-[13px] font-bold text-center ${CELL_FONT}`}>X</div>
        </div>
      </TaskIcon>
      <div className="ml-auto flex items-center text-[15px] text-[#111]">
        <span>桌面</span>
        <svg className="ml-[7px]" width="20" height="14" viewBox="0 0 20 14">
          <path d="M4 14a4 4 0 0 1-1-7.800A6 6 0 0 1 14 4.500 4.500 4.500 0 0 1 16 14z" fill="#1a8fe3" />
        </svg>
        <span className={`ml-[4px] w-[65px] text-[16px] overflow-hidden ${CELL_FONT}`}>OneDriv</span>
        <span className="ml-[6px] -mt-[18px] text-[12px] leading-none text-[#6a6ab0]">»</span>
        <svg className="ml-[8px]" width="16" height="9" viewBox="0 0 16 9" fill="none" stroke="#222" strokeWidth="1.200">
          <path d="M.5 8.500L8 1l7.500 7.500" />
        </svg>
        <svg className="ml-[14px]" width="20" height="24" viewBox="0 0 20 24">
          <ellipse cx="10" cy="12" rx="8" ry="11" fill="#111" />
          <ellipse cx="10" cy="16" rx="5" ry="6" fill="#f5f5f5" />
          <path d="M3 21h6v3H2zM11 21h6l1 3h-7z" fill="#f0a818" />
          <rect x="11" y="12" width="8" height="8" fill="#f0c040" />
        </svg>
        <svg className="ml-[12px]" width="20" height="18" viewBox="0 0 20 18" fill="none" stroke="#444" strokeWidth="1.300">
          <path d="M1 13a13 13 0 0 1 13-11M5 15a9 9 0 0 1 9-9M9 16a5 5 0 0 1 5-5" />
          <circle cx="15" cy="15" r="1.500" fill="#444" />
        </svg>
        <svg className="ml-[9px]" width="22" height="14" viewBox="0 0 22 14" fill="none" stroke="#222" strokeWidth="1.500">
          <path d="M2 2.500h17v9H2zM20.500 5.500v3" />
          <path d="M4.500 5v4M7.500 5v4M10.500 5v4M13.500 5v4" />
        </svg>
        <svg className="ml-[14px]" width="18" height="24" viewBox="0 0 18 24" fill="none" stroke="#333" strokeWidth="1.300">
          <path d="M2 22l2-7L13 2l3 2-9 13z" />
          <path d="M9 10l-3 8" />
        </svg>
        <span className={`ml-[16px] text-[#222] text-[16px] ${CELL_FONT}`}>17:20</span>
        <div className="ml-[24px] mr-[31px] w-[20px] h-[20px] bg-black flex flex-col items-center justify-center gap-[3px]">
          <span className="w-[14px] h-px bg-white" />
          <span className="w-[14px] h-px bg-white" />
          <span className="w-[14px] h-px bg-white" />
        </div>
      </div>
      <div className={`absolute left-[1688px] top-[9px] text-[15px] leading-[20px] text-white/55 whitespace-nowrap pointer-events-none ${CELL_FONT}`}>https://blog.csdn.net/..exxxx</div>
    </div>
  )
}

export default function App() {
  return (
    <div className='w-[1920px] h-[1080px] overflow-hidden flex flex-col bg-[#e6e6e6] font-["Noto_Sans_CJK_SC","Noto_Sans",sans-serif]'>
      <div className="relative bg-[#217346] shrink-0">
        <CircuitBackground />
        <TitleBar />
        <TabBar />
      </div>
      <Ribbon />
      <FormulaBar />
      <div className="flex-1 min-h-0 flex">
        <Sheet />
        <VScroll />
      </div>
      <SheetTabs />
      <StatusBar />
      <Taskbar />
    </div>
  )
}
